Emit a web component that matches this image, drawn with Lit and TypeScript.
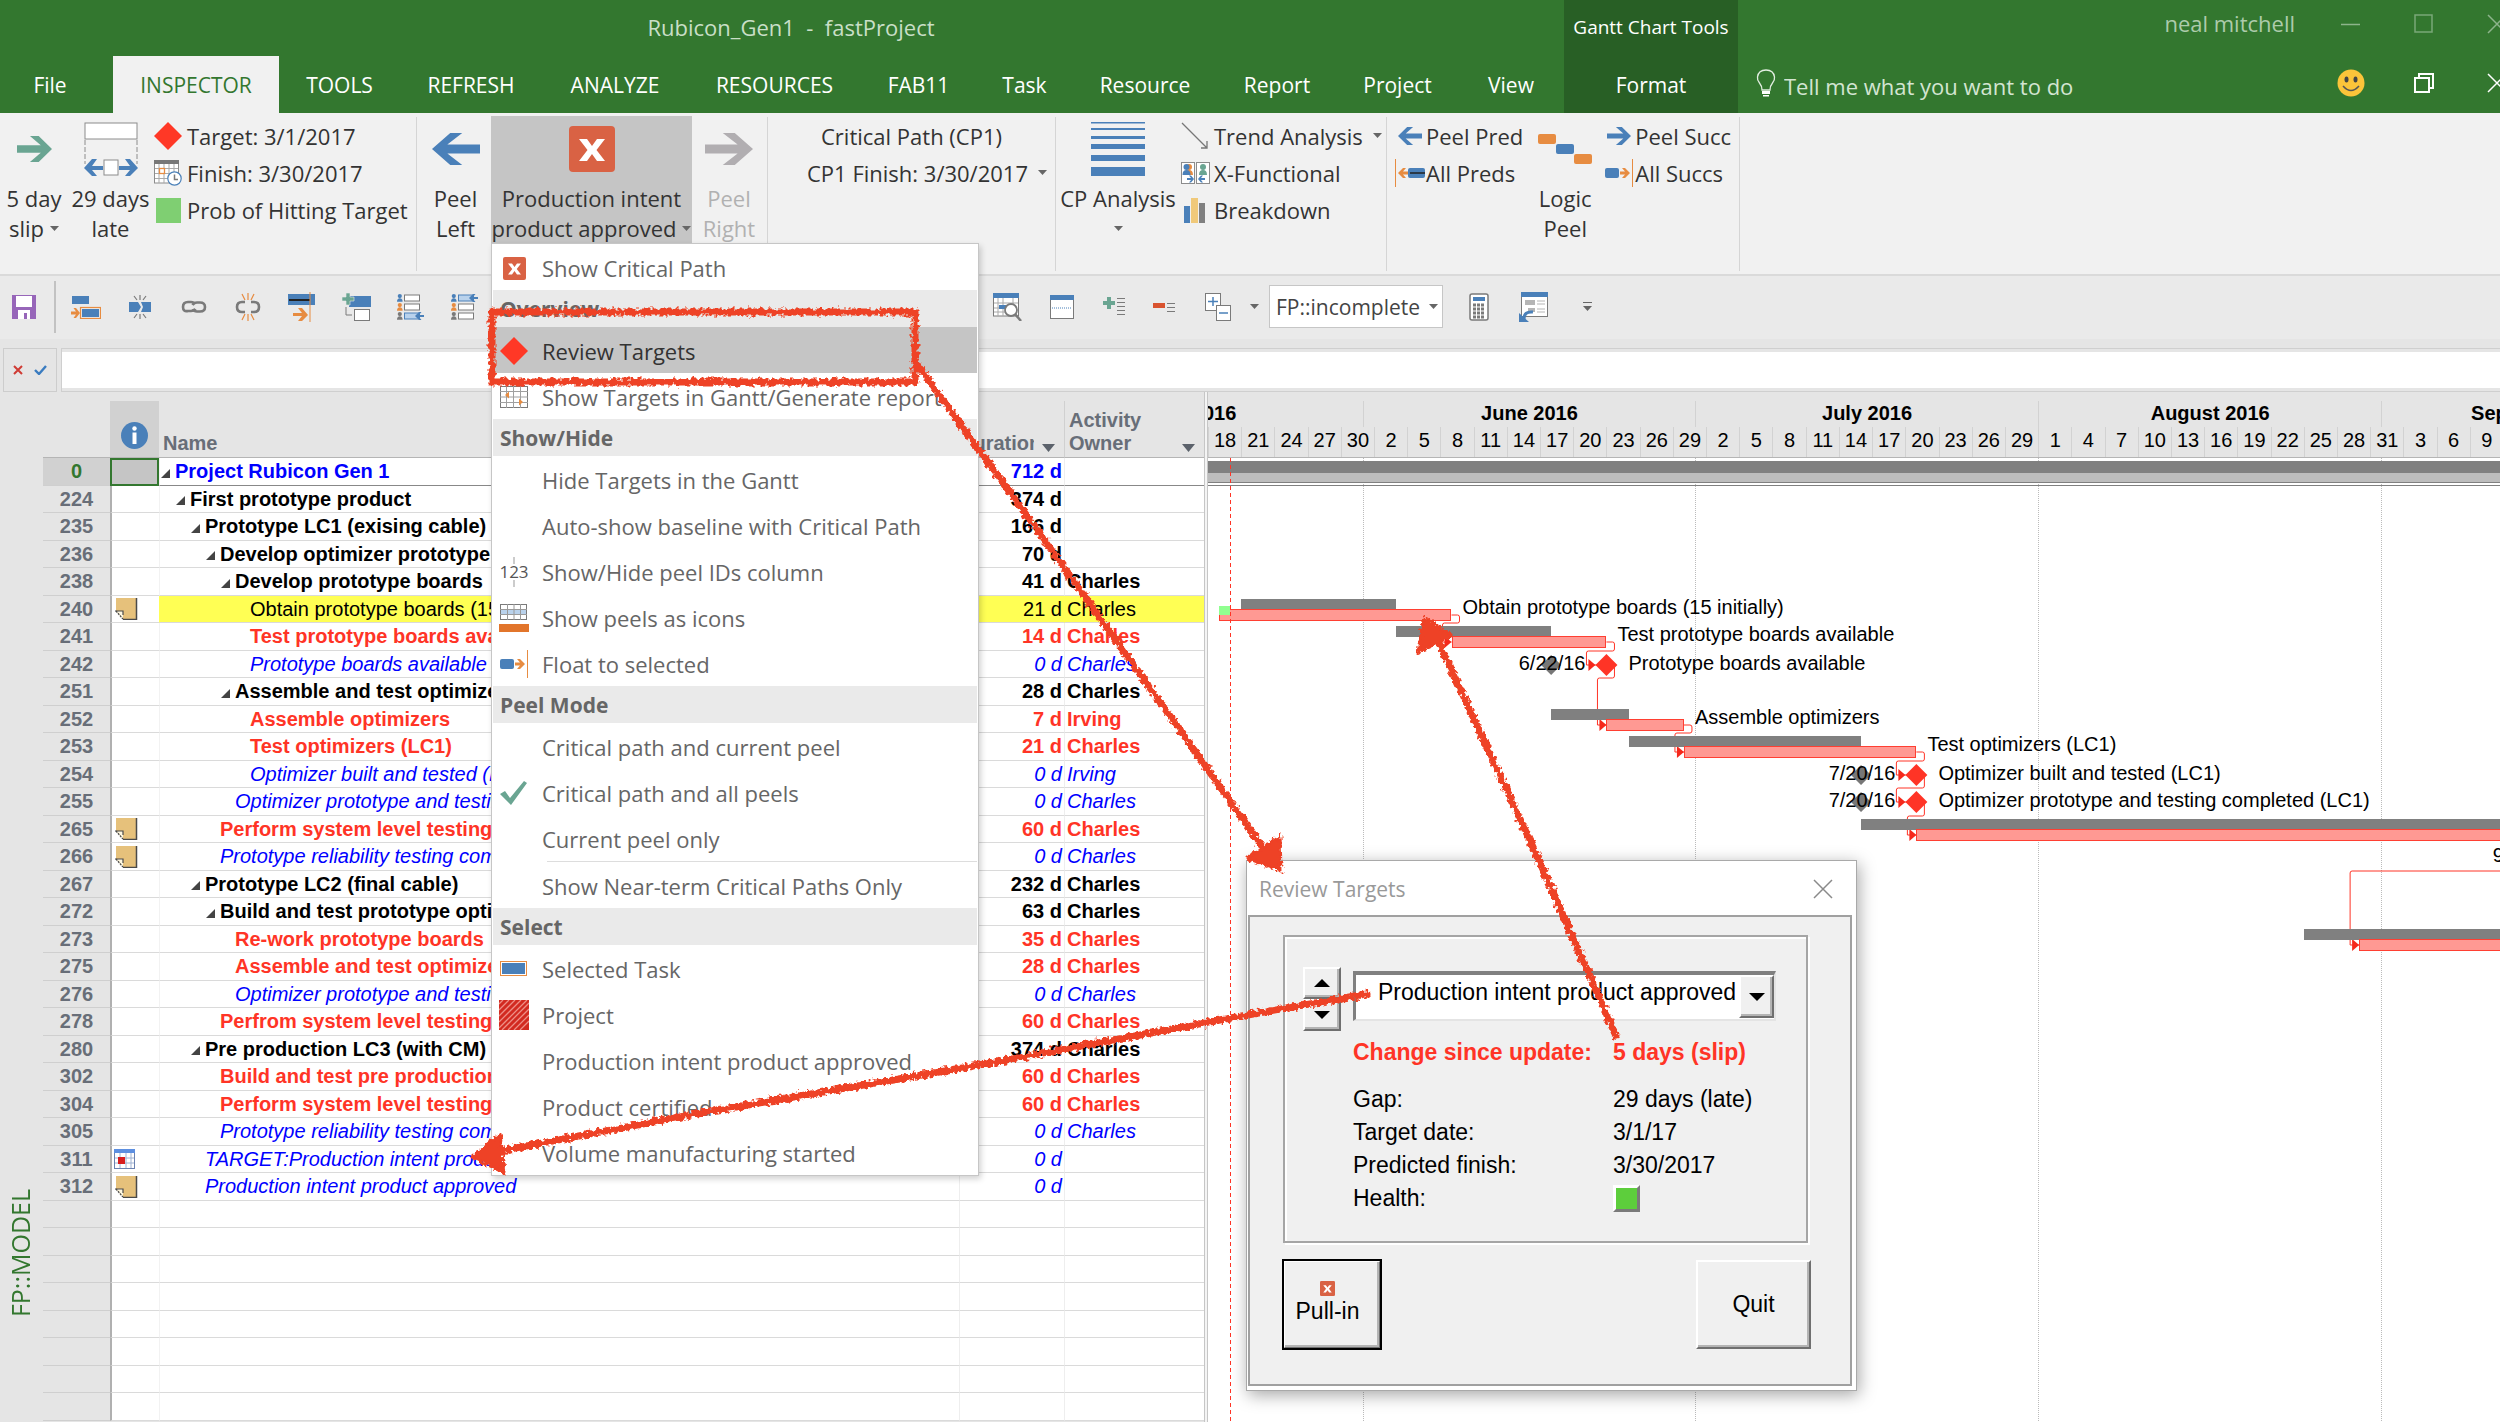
import { LitElement, html, svg, css, nothing, TemplateResult } from "lit";
import { customElement } from "lit/decorators.js";
import { classMap } from "lit/directives/class-map.js";

/* ---------- data ---------- */

type Kind = "sum" | "root" | "crit" | "mile" | "plain";

interface Task {
  id: number;
  level: number;
  name: string;
  kind: Kind;
  duration: string;
  owner?: string;
  note?: "note" | "cal";
}

const tasks: Task[] = [
  { id: 0, level: 0, name: "Project Rubicon Gen 1", kind: "root", duration: "712 d" },
  { id: 224, level: 1, name: "First prototype product", kind: "sum", duration: "374 d" },
  { id: 235, level: 2, name: "Prototype LC1 (exising cable)", kind: "sum", duration: "166 d" },
  { id: 236, level: 3, name: "Develop optimizer prototype", kind: "sum", duration: "70 d" },
  { id: 238, level: 4, name: "Develop prototype boards", kind: "sum", duration: "41 d", owner: "Charles" },
  { id: 240, level: 5, name: "Obtain prototype boards (15 initially)", kind: "plain", duration: "21 d", owner: "Charles", note: "note" },
  { id: 241, level: 5, name: "Test prototype boards available", kind: "crit", duration: "14 d", owner: "Charles" },
  { id: 242, level: 5, name: "Prototype boards available", kind: "mile", duration: "0 d", owner: "Charles" },
  { id: 251, level: 4, name: "Assemble and test optimizers", kind: "sum", duration: "28 d", owner: "Charles" },
  { id: 252, level: 5, name: "Assemble optimizers", kind: "crit", duration: "7 d", owner: "Irving" },
  { id: 253, level: 5, name: "Test optimizers (LC1)", kind: "crit", duration: "21 d", owner: "Charles" },
  { id: 254, level: 5, name: "Optimizer built and tested (LC1)", kind: "mile", duration: "0 d", owner: "Irving" },
  { id: 255, level: 4, name: "Optimizer prototype and testing completed (LC1)", kind: "mile", duration: "0 d", owner: "Charles" },
  { id: 265, level: 3, name: "Perform system level testing", kind: "crit", duration: "60 d", owner: "Charles", note: "note" },
  { id: 266, level: 3, name: "Prototype reliability testing completed", kind: "mile", duration: "0 d", owner: "Charles", note: "note" },
  { id: 267, level: 2, name: "Prototype LC2 (final cable)", kind: "sum", duration: "232 d", owner: "Charles" },
  { id: 272, level: 3, name: "Build and test prototype optimizers", kind: "sum", duration: "63 d", owner: "Charles" },
  { id: 273, level: 4, name: "Re-work prototype boards", kind: "crit", duration: "35 d", owner: "Charles" },
  { id: 275, level: 4, name: "Assemble and test optimizers", kind: "crit", duration: "28 d", owner: "Charles" },
  { id: 276, level: 4, name: "Optimizer prototype and testing", kind: "mile", duration: "0 d", owner: "Charles" },
  { id: 278, level: 3, name: "Perfrom system level testing", kind: "crit", duration: "60 d", owner: "Charles" },
  { id: 280, level: 2, name: "Pre production LC3 (with CM)", kind: "sum", duration: "374 d", owner: "Charles" },
  { id: 302, level: 3, name: "Build and test pre production", kind: "crit", duration: "60 d", owner: "Charles" },
  { id: 304, level: 3, name: "Perform system level testing", kind: "crit", duration: "60 d", owner: "Charles" },
  { id: 305, level: 3, name: "Prototype reliability testing completed", kind: "mile", duration: "0 d", owner: "Charles" },
  { id: 311, level: 2, name: "TARGET:Production intent product", kind: "mile", duration: "0 d", note: "cal" },
  { id: 312, level: 2, name: "Production intent product approved", kind: "mile", duration: "0 d", note: "note" },
];

const ROWS = 35;
/* Rows alternate between 28 and 27 pixels. */
const rowTop = (i: number) => 28 * Math.ceil(i / 2) + 27 * Math.floor(i / 2);
const BODY_H = rowTop(ROWS);

/* Timeline: day 0 is 18 May 2016, 39 columns of three days each. */
const DAYS = 117;
const CHART_W = 1295;
const pct = (d: number) => `${(d / DAYS) * 100}%`;
const dx = (d: number) => (d / DAYS) * CHART_W;

const months = [
  { name: "May 2016", start: -17, days: 31 },
  { name: "June 2016", start: 14, days: 30 },
  { name: "July 2016", start: 44, days: 31 },
  { name: "August 2016", start: 75, days: 31 },
  { name: "September 2016", start: 106, days: 30 },
];

const dayLabels = [
  18, 21, 24, 27, 30, 2, 5, 8, 11, 14, 17, 20, 23, 26, 29, 2, 5, 8, 11, 14, 17, 20, 23, 26, 29,
  1, 4, 7, 10, 13, 16, 19, 22, 25, 28, 31, 3, 6, 9,
];

interface Bar { row: number; base: [number, number]; crit: [number, number]; label?: string; }
const bars: Bar[] = [
  { row: 5, base: [3, 17], crit: [1, 22], label: "Obtain prototype boards (15 initially)" },
  { row: 6, base: [17, 31], crit: [22, 36], label: "Test prototype boards available" },
  { row: 9, base: [31, 38], crit: [36, 43], label: "Assemble optimizers" },
  { row: 10, base: [38, 59], crit: [43, 64], label: "Test optimizers (LC1)" },
  { row: 13, base: [59, 119], crit: [64, 124] },
  { row: 17, base: [99, 134], crit: [104, 139] },
];

interface Mile { row: number; base: number; at: number; date: string; label: string; }
const miles: Mile[] = [
  { row: 7, base: 31, at: 36, date: "6/22/16", label: "Prototype boards available" },
  { row: 11, base: 59, at: 64, date: "7/20/16", label: "Optimizer built and tested (LC1)" },
  { row: 12, base: 59, at: 64, date: "7/20/16", label: "Optimizer prototype and testing completed (LC1)" },
  { row: 14, base: 119, at: 124, date: "9/28/16", label: "" },
];

/* from day/row, to day/row, whether either end is a milestone */
interface Link { fd: number; fr: number; fm?: boolean; td: number; tr: number; tm?: boolean; }
const links: Link[] = [
  { fd: 22, fr: 5, td: 22, tr: 6 },
  { fd: 36, fr: 6, td: 36, tr: 7, tm: true },
  { fd: 36, fr: 7, fm: true, td: 36, tr: 9 },
  { fd: 43, fr: 9, td: 43, tr: 10 },
  { fd: 64, fr: 10, td: 64, tr: 11, tm: true },
  { fd: 64, fr: 11, fm: true, td: 64, tr: 12, tm: true },
  { fd: 64, fr: 12, fm: true, td: 64, tr: 13 },
  { fd: 124, fr: 14, fm: true, td: 104, tr: 17 },
];

/* ---------- icons ---------- */

const BLUE = "#4a80b9";
const ORANGE = "#e78c41";
const GREEN = "#6aa592";
const GREY = "#7a7a7a";

const icon = (w: number, h: number, body: TemplateResult | TemplateResult[]) =>
  html`<svg width=${w} height=${h} viewBox="0 0 ${w} ${h}" aria-hidden="true">${body}</svg>`;

const arrowR = (w: number, h: number, c: string) =>
  icon(w, h, svg`<path fill=${c} d="M0 ${h / 2 - h * 0.14}H${w * 0.68}L${w * 0.37} 0H${w * 0.62}L${w} ${h / 2}L${w * 0.62} ${h}H${w * 0.37}L${w * 0.68} ${h / 2 + h * 0.14}H0Z"/>`);
const arrowL = (w: number, h: number, c: string) =>
  icon(w, h, svg`<path fill=${c} d="M${w} ${h / 2 - h * 0.14}H${w * 0.32}L${w * 0.63} 0H${w * 0.38}L0 ${h / 2}L${w * 0.38} ${h}H${w * 0.63}L${w * 0.32} ${h / 2 + h * 0.14}H${w}Z"/>`);

const caret = html`<svg class="caret" width="9" height="5" viewBox="0 0 9 5" aria-hidden="true"><path fill="#666" d="M0 0H9L4.500 5Z"/></svg>`;

const diamond = icon(28, 28, svg`<path fill="#ff3826" d="M14 0L28 14L14 28L0 14Z"/>`);

const crossBox = (s: number) => html`<svg width=${s} height=${s} viewBox="0 0 46 46" aria-hidden="true">
  <rect width="46" height="46" rx="4" fill="#d96244"/>
  <path fill="#fff" d="M10 13H18L23 20L28 13H36L27.500 24L36 35H28L23 28L18 35H10L18.500 24Z"/></svg>`;

const rangeIcon = icon(54, 54, svg`
  <rect x="1" y="1" width="52" height="16" fill="#fff" stroke="#8c8c8c"/>
  <path d="M1 18V42M53 18V42" stroke="#8c8c8c" stroke-dasharray="5 2"/>
  <path fill=${BLUE} d="M0 46L8 37H13L8 44H19V48H8L13 54H8ZM54 46L46 37H41L46 44H35V48H46L41 54H46Z"/>
  <rect x="20" y="38" width="14" height="15" fill="#fff" stroke="#8c8c8c"/>`);

const calClock = icon(28, 26, svg`
  <rect x=".5" y="1" width="24" height="22" fill="#fff" stroke="#8c8c8c"/><path fill="#777" d="M0 0H25V4H0Z"/>
  <path d="M5 4V23M10 4V23M15 4V23M20 4V23M1 8.500H24M1 13.500H24M1 18.500H24" stroke="#a9a9a9"/>
  <rect x="5.500" y="8.500" width="5" height="5" fill="#fff" stroke="#e78c41" stroke-width="1.300"/>
  <circle cx="20.500" cy="18.500" r="6.700" fill="#fff" stroke=${BLUE} stroke-width="1.200"/><path d="M20.500 14.500V19.500H24" fill="none" stroke="#7a7a7a" stroke-width="1.500"/>`);

const greenSquare = icon(26, 26, svg`<rect x="1" y="1" width="25" height="25" fill="#7fcf72"/>`);

const linesIcon = icon(54, 54, svg`<path fill=${BLUE} d="M0 0H54V1.500H0ZM0 6H54V8H0ZM0 14H54V17H0ZM0 22H54V27H0ZM0 33H54V39H0ZM0 45H54V54H0Z"/>`);

const trendIcon = icon(28, 28, svg`<path d="M1 1L26 26M26 19V26H20" fill="none" stroke="#777" stroke-width="1.300"/>`);

const person = (x: number, y: number, c: string, s = 1) => svg`<g transform="translate(${x} ${y}) scale(${s})" fill=${c}><circle cx="4" cy="3" r="3"/><path d="M0 11Q0 6 4 6Q8 6 8 11Z"/></g>`;

const xfIcon = icon(29, 22, svg`
  <rect x=".5" y=".5" width="13" height="21" fill="#fff" stroke="#8c8c8c"/><rect x="15.500" y=".5" width="13" height="21" fill="#fff" stroke="#8c8c8c"/>
  ${person(4, 2, ORANGE)}${person(1.5, 2, BLUE)}${person(18, 2, GREEN)}
  <path fill=${BLUE} d="M6 16H10L8 13.500H10L13 17L10 20.500H8L10 18H6ZM24 16H20L22 13.500H20L17 17L20 20.500H22L20 18H24Z"/>`);

const chartIcon = icon(28, 26, svg`<path fill=${BLUE} d="M3 9H9V26H3Z"/><path fill="#f0c97a" d="M10 1H17V26H10Z"/><path fill="#808080" d="M18 6H24V26H18Z"/>`);

const predIcon = icon(30, 28, svg`<path d="M.5 0V28" stroke=${ORANGE}/><path fill=${ORANGE} d="M3 14L8 9H11L8 12.500H13V15.500H8L11 19H8Z"/><rect x="13" y="9" width="17" height="10" rx="2" fill=${BLUE}/><path stroke="#222" stroke-width="1.500" d="M15 14H30"/>`);
const succIcon = icon(28, 28, svg`<path d="M27.500 0V28" stroke=${ORANGE}/><path fill=${ORANGE} d="M25 14L20 9H17L20 12.500H15V15.500H20L17 19H20Z"/><rect y="9" width="14" height="10" rx="2" fill=${BLUE}/>`);
const logicIcon = icon(54, 30, svg`<rect width="18" height="10" rx="2" fill=${ORANGE}/><rect x="18" y="10" width="18" height="10" rx="2" fill=${BLUE}/><rect x="36" y="20" width="18" height="10" rx="2" fill=${ORANGE}/>`);

const saveIcon = icon(24, 24, svg`<path fill="#9766b9" d="M0 0H24V24H0Z"/><path fill="#fff" d="M4 1H20V12H4ZM6 15H18V24H15V18H12V24H6Z"/>`);
const qa1 = icon(30, 24, svg`<path fill=${BLUE} d="M1 1H18V9H1Z"/><rect x="9.500" y="12.500" width="20" height="11" fill="none" stroke=${ORANGE} stroke-width="1.200"/><path fill=${BLUE} d="M11 14H28V22H11Z"/><path fill=${ORANGE} d="M0 16.500H5L2.500 13H5L9 18L5 23H2.500L5 19.500H0Z"/>`);
const splitIcon = icon(22, 24, svg`<path fill=${BLUE} d="M0 7H9L12 12L9 17H0ZM12 7H22V17H12L14 12Z"/><path d="M11 0V5M5 1L8 5M17 1L14 5M11 24V19M5 23L8 19M17 23L14 19" stroke=${GREY} stroke-width="1.200"/>`);
const chain = icon(26, 14, svg`<g fill="none" stroke=${GREY} stroke-width="2.600"><path d="M14 4Q13 2 10 2H7Q2 2 2 7T7 11H10Q13 11 14.500 9"/><path d="M12 9Q13 11.500 16 11.500H19Q24 11.500 24 7T19 2.500H16Q13 2.500 11.500 5"/></g>`);
const unchain = icon(26, 28, svg`<g fill="none" stroke=${GREY} stroke-width="2.600"><path d="M10 9H7Q2 9 2 14T7 19H10"/><path d="M16 9H19Q24 9 24 14T19 19H16"/></g><path d="M13 0V7M7 1L10 7M19 1L16 7M13 28V21M7 27L10 21M19 27L16 21" stroke=${ORANGE} stroke-width="1.200"/>`);
const moveIcon = icon(28, 30, svg`<path fill=${BLUE} d="M0 2H27V13H0Z"/><path stroke="#222" stroke-width="2" d="M1 8H22"/><path stroke=${ORANGE} d="M22 0V30"/><path fill=${ORANGE} d="M5 21H14L10 16H14L20 23L14 29H10L14 24H5Z"/>`);
const addTask = icon(29, 28, svg`<path fill=${BLUE} d="M7 3H29V14H7Z"/><path fill=${GREEN} stroke="#eaeaea" stroke-width=".6" d="M4 0H8V4H12V8H8V12H4V8H0V4H4Z"/><rect x="12.500" y="16.500" width="15" height="11" fill="#fff" stroke=${GREY}/><path d="M4 14V22H10" fill="none" stroke=${GREY}/>`);
const teamIcon = (hi: number) => icon(27, 26, svg`${[BLUE, ORANGE, GREY].map((c, i) => svg`
  ${person(0, i * 9, c, 0.7)}
  <rect x="7.500" y=${i * 9 + 1} width="15" height="6" fill=${i === hi ? "#b9d2ec" : "#fff"} stroke=${i === hi ? BLUE : GREY}/>
  ${i === hi ? svg`<path fill=${BLUE} d="M18 ${i * 9 + 4}L22 ${i * 9}H24.500L22 ${i * 9 + 3}H27V${i * 9 + 5}H22L24.500 ${i * 9 + 8}H22Z"/>` : nothing}`)}`);
const findIcon = icon(30, 28, svg`<rect x=".5" y="1" width="25" height="22" fill="#fff" stroke=${GREY}/><path fill=${BLUE} d="M0 0H26V5H0Z"/><path d="M5 5V23M1 10H25M1 15H16M1 19H14M10 5V23M20 5V12" stroke="#a9a9a9"/><path fill=${BLUE} d="M6 12H13V16H6Z"/><circle cx="18" cy="17" r="6" fill="#fff" stroke=${GREY} stroke-width="1.800"/><path d="M22 21L28 28" stroke=${GREY} stroke-width="2.500"/>`);
const paneIcon = icon(24, 24, svg`<rect x=".5" y=".5" width="23" height="23" fill="#fff" stroke=${GREY}/><path fill=${BLUE} d="M0 0H24V5H0Z"/><path stroke=${BLUE} stroke-dasharray="1 1" d="M2 13H22"/>`);
const expandIcon = icon(22, 20, svg`<path fill=${GREEN} d="M4 0H8V4H12V8H8V12H4V8H0V4H4Z"/><path stroke=${GREY} d="M14 1.500H22M14 5.500H22M14 9.500H22M14 13.500H22M14 17.500H22"/>`);
const shrinkIcon = icon(22, 10, svg`<path fill="#d9532f" d="M0 1H12V6H0Z"/><path stroke=${GREY} d="M14 1.500H22M14 5.500H22M14 9.500H22"/>`);
const outlineIcon = icon(26, 28, svg`<rect x=".5" y=".5" width="15" height="17" fill="#fff" stroke=${GREY}/><path d="M8 4V13M3 8.500H13" stroke=${BLUE} stroke-width="1.500"/><rect x="11.500" y="12.500" width="14" height="15" fill="#fff" stroke=${GREY}/><path d="M14 20H23" stroke=${BLUE} stroke-width="1.500"/>`);
const calcIcon = icon(20, 28, svg`<rect x="1" y="1" width="18" height="26" rx="2" fill="#fff" stroke=${GREY} stroke-width="1.500"/><path fill=${BLUE} d="M4 4H16V8H4Z"/><path stroke=${GREY} stroke-width="3" stroke-dasharray="3 1" d="M4 12H16M4 16H16M4 20H16M4 24H16"/>`);
const formIcon = icon(29, 30, svg`<rect x="2.500" y=".5" width="26" height="24" fill="#fff" stroke=${GREY}/><path fill=${BLUE} d="M2 0H29V5H2Z"/><path fill="#b5b5b5" d="M6 8H16V13H6ZM9 16H16V20H9Z"/><path stroke="#b5b5b5" d="M18 9H26M18 12H26M18 17H26M18 20H26"/><path d="M4 27Q4 19 13 20" transform="translate(1 0)" fill="none" stroke=${BLUE} stroke-width="3"/><path fill=${BLUE} d="M0 21V30H10Z"/>`);
const overflowIcon = icon(9, 10, svg`<path stroke="#666" d="M0 .5H9"/><path fill="#666" d="M0 4H9L4.500 9Z"/>`);

const reportIcon = icon(28, 22, svg`<rect x=".5" y=".5" width="27" height="21" fill="#fff" stroke=${GREY}/><path stroke="#a0a0a0" d="M6.500 0V22M13.500 0V22M20.500 0V22M0 5.500H28M0 11H28M0 16.500H28"/><path fill=${ORANGE} d="M5 9L9 5.500V12.500ZM23 16L19 12.500V19.500Z"/>`);
const idsIcon = icon(30, 30, svg`<path stroke="#999" d="M15 0V7M15 23V30"/><text x="15" y="21" text-anchor="middle" font-size="17" fill="#555" font-family="Open Sans, sans-serif">123</text>`);
const peelsIcon = icon(30, 28, svg`<rect x="1.500" y=".5" width="26" height="15" fill="#fff" stroke=${GREY}/><path fill="#b9d2ec" d="M2 5.500H27V10.500H2Z"/><path stroke="#9a9a9a" d="M8.500 0V16M15 0V16M21.500 0V16M1 5.500H28M1 10.500H28"/><path fill="#e2752b" d="M0 20H30V28H0Z"/>`);
const tickIcon = icon(28, 24, svg`<path fill="#6aa592" d="M0 13L5 10L10 17L24 0L27 2L11 24Z"/>`);
const selTask = icon(28, 16, svg`<rect x=".5" y=".5" width="26" height="14" fill="#fff" stroke=${ORANGE}/><rect x="2" y="2" width="23" height="11" fill=${BLUE}/>`);
const hatch = icon(30, 30, svg`<rect width="30" height="30" fill="#d22a20"/><path stroke="#ee8f86" stroke-width="1.300" d="M0 10L10 0M0 16L16 0M0 22L22 0M0 28L28 0M3 30L30 3M9 30L30 9M15 30L30 15M21 30L30 21M0 4L4 0"/>`);

const noteIcon = icon(24, 22, svg`<path fill="#e6c17b" d="M2 0H22V21H9L2 13Z"/><path stroke="#4a4a4a" stroke-width="1.500" fill="none" d="M22.500 0V21.500H9"/><path fill="#fff8e0" d="M2 13H9V21Z"/><path stroke="#4a4a4a" stroke-width="1.200" stroke-dasharray="2 1" fill="none" d="M2 13L9 21"/><path stroke="#4a4a4a" stroke-width="1.200" fill="none" d="M1 13H9V17"/>`);
const calIcon = icon(22, 20, svg`<rect x=".5" y=".5" width="20" height="19" fill="#fff" stroke="#6b82b0"/><path fill="#5d8fe0" d="M0 0H21V4H0Z"/><path stroke="#9fb2d2" d="M6 4V19M12 4V19M17 4V19M1 9H20M1 14H20"/><path fill="#d81e1e" d="M4 8H11V15H4Z"/>`);
const infoIcon = icon(27, 27, svg`<circle cx="13.500" cy="13.500" r="13.500" fill=${BLUE}/><circle cx="13.500" cy="6.500" r="2.200" fill="#fff"/><path fill="#fff" d="M11.500 10.500H15.500V22H11.500Z"/>`);
const bulbIcon = icon(20, 28, svg`<path d="M6 21Q6 17 3.500 14Q1 11 1.500 8Q2.500 1 10 1T18.500 8Q19 11 16.500 14Q14 17 14 21Z" fill="none" stroke="#e2eee1" stroke-width="1.300"/><path fill="#fff" d="M6 22H14V25H6ZM7 26H13V27.500H7Z"/>`);
const smileIcon = icon(28, 28, svg`<circle cx="14" cy="14" r="13.500" fill="#fbc43a"/><ellipse cx="9.500" cy="10.500" rx="2" ry="3" fill="#444"/><ellipse cx="18.500" cy="10.500" rx="2" ry="3" fill="#444"/><path d="M6 17Q14 26 22 17" fill="none" stroke="#555" stroke-width="1.500"/>`);
const restoreIcon = icon(20, 20, svg`<path d="M5 5V1H19V15H15" fill="none" stroke="#fff" stroke-width="2"/><rect x="1" y="5" width="14" height="14" fill="none" stroke="#fff" stroke-width="2"/>`);
const closeIcon = (c: string) => icon(20, 20, svg`<path d="M1 1L19 19M19 1L1 19" stroke=${c} stroke-width="1.500"/>`);
const minIcon = icon(20, 20, svg`<path d="M0 10.500H19" stroke="#8db48b" stroke-width="1.500"/>`);
const maxIcon = icon(20, 20, svg`<rect x="1" y="1" width="17" height="17" fill="none" stroke="#7aa878" stroke-width="1.500"/>`);
const outlineMark = html`<svg class="mark" width="9" height="9" viewBox="0 0 9 9" aria-hidden="true"><path fill="#444" d="M9 0V9H0Z"/></svg>`;
const tri = (up: boolean) => icon(16, 8, up ? svg`<path d="M0 8H16L8 0Z"/>` : svg`<path d="M0 0H16L8 8Z"/>`);
const filterMark = html`<svg class="filter" width="13" height="8" viewBox="0 0 13 8" aria-hidden="true"><path fill="#5c626b" d="M0 0H13L6.500 8Z"/></svg>`;

/* ---------- shared styles ---------- */

const base = css`
  * { box-sizing: border-box; }
  svg { display: block; flex: none; }
  button, input, select { font: inherit; color: inherit; margin: 0; padding: 0; border: 0; background: none; border-radius: 0; outline: none; }
  button { cursor: pointer; white-space: nowrap; }
  select { appearance: none; }
`;

/* ---------- title bar and tabs ---------- */

@customElement("fp-header")
class FpHeader extends LitElement {
  static styles = [base, css`
    :host { display: block; background: #33772f; color: #fff; font-size: 22px; }
    .bar { display: grid; grid-template-columns: 1564px 174px 1fr; height: 113px; }
    .left, .ctx, .right { display: grid; grid-template-rows: 56px 57px; }
    .title { padding-left: 18px; text-align: center; line-height: 54px; color: #c9dfc7; white-space: pre; }
    .tabs { display: grid; grid-template-columns: 113px 166px 121px 142px 146px 173px 115px 97px 144px 120px 121px 106px; }
    .tab { line-height: 58px; font-size: 21px; }
    .file { padding-right: 13px; }
    .on { background: #f1f1f1; color: #33772f; }
    .ctx { background: #285f25; text-align: center; }
    .ctxname { font-size: 19px; line-height: 54px; }
    .top, .low { display: flex; align-items: center; overflow: hidden; margin-right: -7px; }
    .top { justify-content: flex-end; padding-bottom: 8px; color: #adcbab; }
    .user { margin-right: 46px; padding-bottom: 3px; }
    .top button, .low button { flex: none; display: flex; }
    .top .win { margin-right: 53px; }
    .low { padding: 0 0 3px 18px; gap: 8px; }
    .tell { flex: 1; padding-top: 6px; color: #d3e5d2; min-width: 0; }
    .tell::placeholder { color: #d3e5d2; opacity: 1; }
    .low .win { margin-right: 45px; }
    .low .face { margin-right: 41px; }
  `];
  render() {
    const tabs = ["File", "INSPECTOR", "TOOLS", "REFRESH", "ANALYZE", "RESOURCES", "FAB11", "Task", "Resource", "Report", "Project", "View"];
    return html`<header class="bar">
      <div class="left">
        <div class="title">Rubicon_Gen1  -  fastProject</div>
        <nav class="tabs">${tabs.map((t, i) => html`<button class=${classMap({ tab: true, file: i === 0, on: i === 1 })}>${t}</button>`)}</nav>
      </div>
      <div class="ctx"><span class="ctxname">Gantt Chart Tools</span><button class="tab">Format</button></div>
      <div class="right">
        <div class="top"><span class="user">neal mitchell</span>
          <button class="win" aria-label="Minimize">${minIcon}</button>
          <button class="win" aria-label="Maximize">${maxIcon}</button>
          <button aria-label="Close">${closeIcon("#8db48b")}</button></div>
        <div class="low">${bulbIcon}
          <input class="tell" aria-label="Tell me what you want to do" placeholder="Tell me what you want to do">
          <button class="face" aria-label="Feedback">${smileIcon}</button>
          <button class="win" aria-label="Restore window">${restoreIcon}</button>
          <button aria-label="Close window">${closeIcon("#fff")}</button></div>
      </div>
    </header>`;
  }
}

/* ---------- drop-down menu ---------- */

@customElement("fp-menu")
class FpMenu extends LitElement {
  static styles = [base, css`
    :host { display: block; width: 488px; background: #fff; border: 1px solid #c6c6c6; box-shadow: 2px 3px 6px rgba(0,0,0,.18); color: #666; font-size: 22px; text-align: left; padding: 0 1px; }
    .head { height: 37px; line-height: 38px; padding-left: 7px; background: #eaeaea; font-weight: 700; font-size: 21px; }
    .item { display: grid; grid-template-columns: 30px 1fr; column-gap: 13px; align-items: center; width: 100%; height: 46px; padding: 2px 0 0 6px; text-align: left; }
    .item svg { justify-self: center; }
    .hot { background: #c5c5c5; color: #333; }
    .sep { height: 1px; background: #ddd; margin-left: 54px; }
  `];
  private item(text: string, ic: unknown = html`<span></span>`, hot = false) {
    return html`<button role="menuitem" class=${classMap({ item: true, hot })}>${ic}<span>${text}</span></button>`;
  }
  private head(t: string) { return html`<div class="head">${t}</div>`; }
  render() {
    return html`<div role="menu">
      ${this.item("Show Critical Path", crossBox(23))}
      ${this.head("Overview")}
      ${this.item("Review Targets", diamond, true)}
      ${this.item("Show Targets in Gantt/Generate report", reportIcon)}
      ${this.head("Show/Hide")}
      ${this.item("Hide Targets in the Gantt")}
      ${this.item("Auto-show baseline with Critical Path")}
      ${this.item("Show/Hide peel IDs column", idsIcon)}
      ${this.item("Show peels as icons", peelsIcon)}
      ${this.item("Float to selected", succIcon)}
      ${this.head("Peel Mode")}
      ${this.item("Critical path and current peel")}
      ${this.item("Critical path and all peels", tickIcon)}
      ${this.item("Current peel only")}
      <div class="sep"></div>
      ${this.item("Show Near-term Critical Paths Only")}
      ${this.head("Select")}
      ${this.item("Selected Task", selTask)}
      ${this.item("Project", hatch)}
      ${this.item("Production intent product approved")}
      ${this.item("Product certified")}
      ${this.item("Volume manufacturing started")}
    </div>`;
  }
}

/* ---------- ribbon ---------- */

@customElement("fp-ribbon")
class FpRibbon extends LitElement {
  static styles = [base, css`
    :host { display: block; color: #333; font-size: 22px; }
    .ribbon { display: flex; height: 163px; background: #f1f1f1; border-bottom: 2px solid #dadada; }
    .group { display: flex; align-items: flex-start; position: relative; height: 161px; flex: none; }
    .group::after { content: ""; position: absolute; right: 0; top: 4px; bottom: 3px; width: 1px; background: #d5d5d5; }
    .big { display: grid; grid-template-rows: 67px 30px 30px; justify-items: center; margin-top: 3px; line-height: 30px; flex: none; }
    .big .pic { align-self: center; padding-bottom: 2px; }
    .line { display: flex; align-items: center; gap: 6px; }
    .dim { color: #b1b1b1; }
    .open { position: relative; z-index: 5; flex: none; }
    .open .big { width: 201px; background: #c5c5c5; height: 127px; }
    .open fp-menu { position: absolute; left: 0; top: 130px; }
    .stack { display: flex; flex-direction: column; margin-top: 4px; }
    .row { display: flex; align-items: center; gap: 4px; height: 37px; text-align: left; }
    .row .pic { width: 30px; display: flex; justify-content: center; }
    .row .caret { margin-left: 6px; }
    .mid { align-items: flex-start; padding-left: 39px; }
    .cp { padding-left: 14px; }
    .g1 { width: 417px; } .g2 { width: 351px; } .g3 { width: 288px; } .g4 { width: 331px; } .g5 { width: 353px; }
    .w1 { width: 68px; } .w2 { width: 85px; } .w3 { width: 74px; padding-left: 3px; } .w4 { width: 74px; } .w5 { width: 124px; } .w6 { width: 54px; margin-left: 15px; }
    .g5 .stack { padding-left: 8px; } .g5 .row { gap: 1px; }
    .g5 .late { padding-left: 12px; }

    .quick { display: flex; align-items: center; height: 63px; padding-bottom: 2px; background: #eaeaea; }
    .quick button { flex: none; width: 54px; height: 40px; display: flex; align-items: center; justify-content: center; }
    .quick .save { width: 47px; }
    .rule { width: 2px; height: 52px; background: #c2c2c2; margin: 0 3px 0 7px; }
    .hole { width: 490px; flex: none; }
    .quick .s { width: 50px; } .quick .l { width: 58px; } .quick .xs { width: 14px; }
    .combo { position: relative; display: flex; align-items: center; width: 174px; height: 43px; margin: 0 9px 0 8px; border: 1px solid #c6c6c6; background: #fff; color: #444; font-size: 21px; }
    .combo select { width: 100%; height: 100%; padding-left: 6px; }
    .combo svg { position: absolute; right: 4px; pointer-events: none; }

    .formula { display: flex; align-items: center; height: 53px; padding: 9px 0 0 3px; background: #e5e5e5; }
    .fbox { display: flex; align-items: center; justify-content: space-around; width: 54px; height: 44px; border: 1px solid #cdcdcd; padding: 0 4px; margin-right: 4px; flex: none; }
    .fbox button { display: flex; padding: 4px; }
    .formula .fin { flex: 1; min-width: 0; height: 44px; background: #fff; border: solid #cfcfcf; border-width: 1px 0 1px 1px; box-shadow: inset 0 3px 0 #e5e5e5, inset 0 -3px 0 #e5e5e5; padding: 0 8px; }
  `];
  private big(cls: string, pic: unknown, l1: unknown, l2: unknown) {
    return html`<button class="big ${cls}"><span class="pic">${pic}</span><span class="line">${l1}</span><span class="line">${l2}</span></button>`;
  }
  private row(pic: unknown, text: string, drop = false) {
    return html`<button class="row"><span class="pic">${pic}</span><span>${text}</span>${drop ? caret : nothing}</button>`;
  }
  private q(cls: string, pic: unknown, label: string) {
    return html`<button class=${cls} aria-label=${label}>${pic}</button>`;
  }
  render() {
    return html`
    <div class="ribbon">
      <div class="group g1">
        ${this.big("w1", arrowR(35, 26, GREEN), "5 day", html`slip ${caret}`)}
        ${this.big("w2", rangeIcon, "29 days", "late")}
        <div class="stack">${this.row(diamond, "Target: 3/1/2017")}${this.row(calClock, "Finish: 3/30/2017")}${this.row(greenSquare, "Prob of Hitting Target")}</div>
      </div>
      <div class="group g2">
        ${this.big("w3", arrowL(48, 32, BLUE), "Peel", "Left")}
        <div class="open">
          ${this.big("", crossBox(46), "Production intent", html`product approved ${caret}`)}
          <fp-menu></fp-menu>
        </div>
        ${this.big("w4 dim", arrowR(48, 32, "#b1aeb1"), "Peel", "Right")}
      </div>
      <div class="group g3"><div class="stack mid">
        <div class="row cp">Critical Path (CP1)</div>
        <button class="row">CP1 Finish: 3/30/2017 ${caret}</button>
      </div></div>
      <div class="group g4">
        ${this.big("w5", linesIcon, "CP Analysis", caret)}
        <div class="stack">${this.row(trendIcon, "Trend Analysis", true)}${this.row(xfIcon, "X-Functional")}${this.row(chartIcon, "Breakdown")}</div>
      </div>
      <div class="group g5">
        <div class="stack">${this.row(arrowL(24, 18, BLUE), "Peel Pred")}${this.row(predIcon, "All Preds")}</div>
        ${this.big("w6", logicIcon, "Logic", "Peel")}
        <div class="stack late">${this.row(arrowR(24, 18, BLUE), "Peel Succ")}${this.row(succIcon, "All Succs")}</div>
      </div>
    </div>
    <div class="quick">
      ${this.q("save", saveIcon, "Save")}<span class="rule"></span>
      ${this.q("", qa1, "Scroll to task")}${this.q("", splitIcon, "Split task")}${this.q("", chain, "Link tasks")}
      ${this.q("", unchain, "Unlink tasks")}${this.q("", moveIcon, "Move task")}${this.q("", addTask, "Insert task")}
      ${this.q("", teamIcon(2), "Level resource")}${this.q("", teamIcon(0), "Level all")}
      <span class="hole"></span>
      ${this.q("", findIcon, "Find")}${this.q("", paneIcon, "Details pane")}${this.q("s", expandIcon, "Show subtasks")}
      ${this.q("s", shrinkIcon, "Hide subtasks")}${this.q("l", outlineIcon, "Outline")}${this.q("xs", caret, "Outline options")}
      <label class="combo"><select aria-label="Filter"><option>FP::incomplete</option></select>${caret}</label>
      ${this.q("", calcIcon, "Calculate")}${this.q("", formIcon, "Form")}${this.q("", overflowIcon, "Customize toolbar")}
    </div>
    <div class="formula">
      <div class="fbox">
        <button aria-label="Cancel">${icon(10, 10, svg`<path d="M1 1L9 9M9 1L1 9" stroke="#cf3b34" stroke-width="2"/>`)}</button>
        <button aria-label="Enter">${icon(13, 10, svg`<path d="M1 5L5 9L12 1" fill="none" stroke="#3a7cc0" stroke-width="2.400"/>`)}</button>
      </div>
      <input class="fin" aria-label="Entry">
    </div>`;
  }
}

/* ---------- task table ---------- */

@customElement("fp-table")
class FpTable extends LitElement {
  static styles = [base, css`
    :host { display: block; overflow: hidden; background: #e5e5e5; padding-top: 9px; font-family: "Liberation Sans", Arial, sans-serif; font-size: 20px; }
    table { width: 100%; table-layout: fixed; border-collapse: separate; border-spacing: 0; }
    .cid { width: 67px; } .cin { width: 49px; } .cdu { width: 105px; } .cow { width: 140px; }
    th, td { padding: 0; overflow: hidden; white-space: nowrap; }
    thead th { height: 57px; background: #e5e5e5; border-bottom: 1px solid #b5b5b5; color: #686e78; text-align: left; vertical-align: bottom; line-height: 23px; }
    thead .info { background: #d1d1d1; vertical-align: middle; }
    .info svg { margin: 13px auto 0; }
    .hcell { display: flex; align-items: flex-end; justify-content: space-between; padding: 0 9px 2px 4px; }
    .clip { overflow: hidden; width: 75px; }
    .dur { padding: 0 9px 2px 0; }
    .hown { border-left: 1px solid #d0d0d0; }
    .filter { margin-bottom: 3px; }
    tbody tr { height: 27px; } tbody tr:nth-child(odd) { height: 28px; }
    tbody td, tbody th { height: inherit; line-height: 25px; background: #fff; border-bottom: 1px solid #dadada; }
    tbody .id { background: #e5e5e5; color: #686e78; font-weight: 700; text-align: center; border-bottom-color: #cfcfcf; }
    .ind { border-left: 2px solid #b0b0b0; padding-left: 2px; }
    .name { border-left: 1px solid #f2f2f2; }
    .ncell { display: flex; align-items: center; }
    .mark { margin-right: 5px; margin-top: 3px; }
    .d { text-align: right; padding-right: 2px; border-left: 1px solid #eee; }
    .o { padding-left: 2px; border-left: 1px solid #eee; }
    .sum td, .root td, .crit td { font-weight: 700; }
    .root td { color: #00f; border-bottom-color: #888; }
    .crit td { color: #ff3426; }
    .mile td { color: #00f; font-style: italic; }
    tr.plain .name, tr.plain .d, tr.plain .o { background: #ffff54; border-left-color: #ffff54; }
    tbody .root .id { background: #d1d1d1; color: #33772f; }
    tbody .root .ind { background: #c5c5c5; border: 2px solid #33772f; }
  `];
  render() {
    const blank = Array.from({ length: ROWS - tasks.length });
    return html`<table>
      <colgroup><col class="cid"><col class="cin"><col><col class="cdu"><col class="cow"></colgroup>
      <thead><tr><th></th><th class="info">${infoIcon}</th>
        <th><div class="hcell">Name</div></th>
        <th><div class="hcell dur"><span class="clip">Duration</span>${filterMark}</div></th>
        <th class="hown"><div class="hcell"><span>Activity<br>Owner</span>${filterMark}</div></th></tr></thead>
      <tbody>
        ${tasks.map((t) => {
          const open = t.kind === "sum" || t.kind === "root";
          return html`<tr class=${t.kind}>
            <th class="id">${t.id}</th>
            <td class="ind">${t.note === "note" ? noteIcon : t.note === "cal" ? calIcon : nothing}</td>
            <td class="name"><div class="ncell" style="padding-left:${t.level * 15 + (open ? 1 : 15)}px">${open ? outlineMark : nothing}<span>${t.name}</span></div></td>
            <td class="d">${t.duration}</td><td class="o">${t.owner ?? ""}</td></tr>`;
        })}
        ${blank.map(() => html`<tr><th class="id"></th><td class="ind"></td><td class="name"></td><td class="d"></td><td class="o"></td></tr>`)}
      </tbody>
    </table>`;
  }
}

/* ---------- chart ---------- */

@customElement("fp-gantt")
class FpGantt extends LitElement {
  static styles = [base, css`
    :host { display: block; overflow: hidden; background: #fff; font-family: "Liberation Sans", Arial, sans-serif; font-size: 20px; color: #000; }
    .inner { margin-right: -3px; }
    .head { background: #e5e5e5; padding-top: 9px; height: 66px; border-bottom: 1px solid #b5b5b5; }
    .months { display: grid; font-weight: 700; text-align: center; line-height: 25px; height: 26px; }
    .months span { border-left: 1px solid #d2d2d2; }
    .days { display: grid; grid-template-columns: repeat(39, 1fr); text-align: center; height: 30px; line-height: 26px; }
    .days span { border-left: 1px solid #d2d2d2; white-space: nowrap; }
    .body { position: relative; }
    .line, .now, .bar, .lab, .root1, .root2, .rootline, .wires { position: absolute; }
    .line { top: 0; bottom: 0; border-left: 1px dotted #bbb; }
    .now { top: 0; bottom: 0; width: 1px; background: repeating-linear-gradient(#ff3426 0 4px, transparent 4px 7px); }
    .root1, .root2, .rootline { left: 0; right: 0; }
    .root1 { top: 3px; height: 12px; background: #808080; }
    .root2 { top: 15px; height: 10px; background: #bdbdbd; border-bottom: 1px solid #808080; }
    .rootline { top: 27px; height: 1px; background: #808080; }
    .grey { height: 11px; background: #808080; }
    .red { height: 12px; border: 1px solid #ff3f32; background: #ff9993; }
    .done { height: 9px; background: #90ff90; }
    .lab { white-space: nowrap; line-height: 24px; }
    .after { padding-left: 11px; }
    .afterm { padding-left: 22px; }
    .before { transform: translateX(-100%); padding-right: 21px; }
    .wires { inset: 0; width: 100%; height: 100%; }
  `];
  private wire(l: Link) {
    const y0 = rowTop(l.fr) + (l.fm ? 14 : 19);
    const x0 = dx(l.fd);
    const turn = rowTop(l.fr + 1);
    const xt = dx(l.td) - (l.tm ? 20 : 9);
    const yt = rowTop(l.tr) + (l.tm ? 14 : 19);
    const tip = xt + 8;
    return svg`<path fill="none" stroke="#ff3426" d="M${x0} ${y0}h6q2 0 2 2V${turn - 2}q0 2 -2 2H${xt + 2}q-2 0 -2 2V${yt}H${tip + (l.tm ? 4 : 1)}"/>
      <path fill="#f5291c" d="M${xt + 2} ${yt - 6}L${tip + 1} ${yt}L${xt + 2} ${yt + 6}Z"/>`;
  }
  render() {
    const first = months[0].start;
    const span = months.reduce((s, m) => s + m.days, 0);
    return html`<div class="inner">
      <div class="head">
        <div class="months" style="width:${pct(span)};margin-left:${pct(first)};grid-template-columns:${months.map((m) => m.days + "fr").join(" ")}">
          ${months.map((m) => html`<span>${m.name}</span>`)}</div>
        <div class="days">${dayLabels.map((d) => html`<span>${d}</span>`)}</div>
      </div>
      <div class="body" style="height:${BODY_H}px">
        ${months.slice(1).map((m) => html`<div class="line" style="left:${pct(m.start)}"></div>`)}
        <div class="root1"></div><div class="root2"></div><div class="rootline"></div>
        <svg class="wires" viewBox="0 0 ${CHART_W} ${BODY_H}" preserveAspectRatio="none" aria-hidden="true">${links.map((l) => this.wire(l))}
          ${miles.map((m) => { const y = rowTop(m.row) + 14, a = dx(m.base), b = dx(m.at); return svg`
            <path fill="#777" d="M${a} ${y - 10}L${a + 10} ${y}L${a} ${y + 10}L${a - 10} ${y}Z"/>
            <path fill="#ff3426" d="M${b} ${y - 11}L${b + 11} ${y}L${b} ${y + 11}L${b - 11} ${y}Z"/>`; })}
        </svg>
        ${bars.map((b) => { const t = rowTop(b.row); return html`
          <div class="bar grey" style="left:${pct(b.base[0])};width:${pct(b.base[1] - b.base[0])};top:${t + 3}px"></div>
          <div class="bar red" style="left:${pct(b.crit[0])};width:${pct(b.crit[1] - b.crit[0])};top:${t + 13}px"></div>
          ${b.label ? html`<div class="lab after" style="left:${pct(b.crit[1])};top:${t - 1}px">${b.label}</div>` : nothing}`; })}
        <div class="bar done" style="left:${pct(1)};width:${pct(1)};top:${rowTop(5) + 10}px"></div>
        ${miles.map((m) => html`
          <div class="lab before" style="left:${pct(m.at)};top:${rowTop(m.row)}px">${m.date}</div>
          <div class="lab afterm" style="left:${pct(m.at)};top:${rowTop(m.row)}px">${m.label}</div>`)}
        <div class="now" style="left:${pct(2)}"></div>
      </div>
    </div>`;
  }
}

/* ---------- dialog ---------- */

@customElement("fp-dialog")
class FpDialog extends LitElement {
  static styles = [base, css`
    :host { display: block; width: 611px; background: #fff; border: 1px solid #a9a9a9; box-shadow: 2px 4px 16px rgba(0,0,0,.35); color: #000; font-family: "Liberation Sans", Arial, sans-serif; font-size: 23px; }
    .title { display: flex; align-items: center; justify-content: space-between; height: 54px; padding: 2px 23px 0 12px; color: #999; font-family: "Open Sans", sans-serif; font-size: 21px; }
    .title button { display: flex; }
    .body { margin: 0 4px 4px 1px; padding: 18px 42px 35px 33px; background: #f0f0f0; border: 2px solid #a0a0a0; }
    .frame { display: grid; grid-template-columns: 38px 1fr; column-gap: 12px; padding: 30px 30px 26px 18px; border: 2px solid #a5a5a5; box-shadow: 2px 2px 0 #fff, inset 2px 2px 0 #fff; align-items: start; }
    .raised, .spin button { background: #f0f0f0; border: 2px solid; border-color: #fff #6f6f6f #6f6f6f #fff; box-shadow: inset -2px -2px 0 #b4b4b4; display: flex; align-items: center; justify-content: center; }
    .spin { display: grid; grid-template-rows: 32px 32px; }
    .combo { display: flex; height: 50px; margin-top: 4px; border: solid; border-width: 4px 2px 2px 3px; border-color: #808080 #e4e4e4 #e4e4e4 #808080; background: #fff; }
    .combo select { flex: 1; min-width: 0; height: 34px; padding-left: 22px; margin-right: -4px; }
    .drop { width: 35px; height: 43px; z-index: 1; pointer-events: none; }
    dl { display: grid; grid-template-columns: 260px 1fr; grid-template-rows: 33px 14px; grid-auto-rows: 33px; align-items: center; margin: 15px 0 0; }
    dt, dd { margin: 0; white-space: nowrap; }
    .warn { color: #ff3426; font-weight: 700; }
    .gap { grid-column: 1 / -1; }
    .health { width: 27px; height: 27px; background: #5dce3c; border: 3px solid; border-color: #fff #7a7a7a #7a7a7a #fff; }
    .foot { display: flex; justify-content: space-between; margin-top: 17px; margin-right: -3px; }
    .btn { height: 89px; flex-direction: column; gap: 2px; }
    .pull { width: 98px; outline: 2px solid #000; outline-offset: -1px; padding: 0 9px 4px 0; }
    .quit { width: 115px; }
  `];
  render() {
    return html`<section role="dialog" aria-labelledby="t">
      <div class="title"><span id="t">Review Targets</span><button aria-label="Close">${closeIcon("#8a8a8a")}</button></div>
      <div class="body">
        <div class="frame">
          <div class="spin"><button aria-label="Previous target">${tri(true)}</button><button aria-label="Next target">${tri(false)}</button></div>
          <div>
            <div class="combo"><select aria-label="Target"><option>Production intent product approved</option></select><span class="raised drop">${tri(false)}</span></div>
            <dl>
              <dt class="warn">Change since update:</dt><dd class="warn">5 days (slip)</dd>
              <div class="gap"></div>
              <dt>Gap:</dt><dd>29 days (late)</dd>
              <dt>Target date:</dt><dd>3/1/17</dd>
              <dt>Predicted finish:</dt><dd>3/30/2017</dd>
              <dt>Health:</dt><dd><div class="health"></div></dd>
            </dl>
          </div>
        </div>
        <div class="foot">
          <button class="raised btn pull">${crossBox(15)}Pull-in</button>
          <button class="raised btn quit">Quit</button>
        </div>
      </div>
    </section>`;
  }
}

/* ---------- page ---------- */

@customElement("app-root")
class AppRoot extends LitElement {
  static styles = [base, css`
    :host { display: flex; flex-direction: column; position: relative; min-height: 100vh; overflow: hidden; background: #fff; font-family: "Open Sans", "Noto Sans", sans-serif; }
    .main { display: flex; align-items: stretch; flex: 1; }
    .rail { width: 43px; flex: none; background: #e5e5e5; display: flex; align-items: flex-end; justify-content: center; padding-bottom: 105px; }
    .view { writing-mode: vertical-rl; transform: rotate(180deg); color: #33772f; font-size: 25px; line-height: 30px; margin-right: 4px; }
    fp-table { flex: 1161 1 0; min-width: 0; }
    fp-gantt { flex: 1292 1 0; min-width: 0; }
    .split { width: 4px; flex: none; background: #f4f4f4; border: solid #c6c6c6; border-width: 0 1px; }
    fp-ribbon { position: relative; z-index: 2; }
    fp-dialog { position: absolute; left: 1246px; top: 860px; z-index: 3; }
    .marks { position: absolute; left: 0; top: 0; z-index: 4; pointer-events: none; }
  `];
  render() {
    return html`
      <fp-header></fp-header>
      <fp-ribbon></fp-ribbon>
      <div class="main">
        <div class="rail"><span class="view">FP::MODEL</span></div>
        <fp-table></fp-table><div class="split"></div><fp-gantt></fp-gantt>
      </div>
      <fp-dialog></fp-dialog>
      <svg class="marks" width="2500" height="1422" viewBox="0 0 2500 1422" aria-hidden="true">
        <defs><filter id="chalk" filterUnits="userSpaceOnUse" x="0" y="0" width="2500" height="1422">
          <feTurbulence type="fractalNoise" baseFrequency="0.25" numOctaves="2" seed="4"/>
          <feDisplacementMap in="SourceGraphic" scale="8" xChannelSelector="R" yChannelSelector="G"/>
        </filter></defs>
        <g filter="url(#chalk)" fill="none" stroke="#ee4226" stroke-width="7" stroke-linejoin="round" stroke-linecap="round">
          <path d="M492 312H915V382H492Z"/>
          <path d="M917 364L974 443L1030 520L1180 730L1266 852"/>
          <path fill="#ee4226" stroke-width="3" d="M1280 836L1247 858L1281 871Z"/>
          <path d="M1616 1036L1538 858L1440 645"/>
          <path fill="#ee4226" stroke-width="3" d="M1424 617L1418 652L1453 636Z"/>
          <path d="M1366 994L1220 1020L980 1065L706 1112L495 1152"/>
          <path fill="#ee4226" stroke-width="3" d="M472 1157L500 1134L504 1173Z"/>
        </g>
      </svg>`;
  }
}
